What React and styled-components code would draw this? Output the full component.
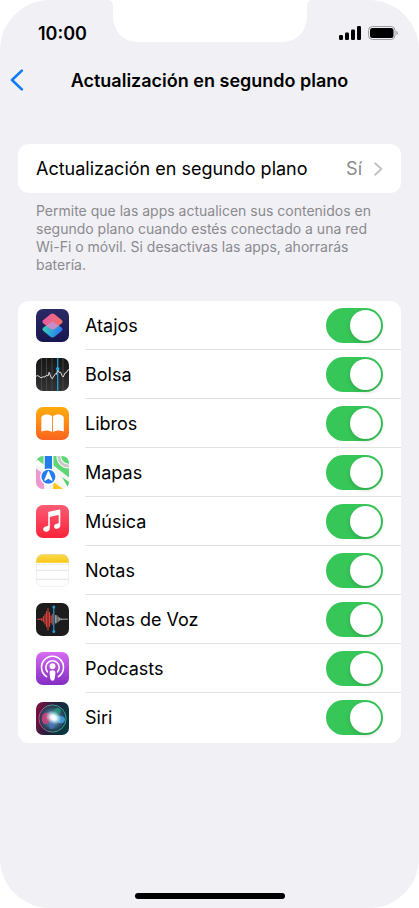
import React, { useState } from "react";
import styled, { createGlobalStyle } from "styled-components";

const AtajosIcon = () => (
  <svg viewBox="0 0 33 33" aria-hidden="true">
    <defs>
      <linearGradient id="atajosBg" x1="0" y1="0" x2="0" y2="1">
        <stop offset="0" stopColor="#2c2a66" />
        <stop offset="1" stopColor="#171650" />
      </linearGradient>
      <linearGradient id="atajosTop" x1="0" y1="0.3" x2="1" y2="0.7">
        <stop offset="0" stopColor="#e85aa8" />
        <stop offset="0.5" stopColor="#ee6783" />
        <stop offset="1" stopColor="#f4705f" />
      </linearGradient>
      <linearGradient id="atajosBottom" x1="0" y1="0.3" x2="1" y2="0.6">
        <stop offset="0" stopColor="#3fd0a8" />
        <stop offset="0.5" stopColor="#2ea6dc" />
        <stop offset="1" stopColor="#2f6ff0" />
      </linearGradient>
    </defs>
    <rect width="33" height="33" rx="7" fill="url(#atajosBg)" />
    <path
      d="M14.6 13.4Q16.5 12.4 18.4 13.4L25.6 18.6Q27.6 20.4 25.6 22L18.6 27.8Q16.5 29.2 14.4 27.8L7.4 22Q5.4 20.4 7.4 18.6Z"
      fill="url(#atajosBottom)"
    />
    <path
      d="M14.4 5.2Q16.5 3.8 18.6 5.2L25.6 11Q27.6 12.6 25.6 14.4L18.6 19.8Q16.5 21.2 14.4 19.8L7.4 14.4Q5.4 12.6 7.4 11Z"
      fill="url(#atajosTop)"
    />
    <path
      d="M10.4 16.7L16.5 12.4L22.6 16.7L18.6 19.8Q16.5 21.2 14.4 19.8Z"
      fill="#b79be0"
      opacity="0.75"
    />
  </svg>
);

const BolsaIcon = () => (
  <svg viewBox="0 0 33 33" aria-hidden="true">
    <defs>
      <linearGradient id="bolsaBg" x1="0" y1="0" x2="0" y2="1">
        <stop offset="0" stopColor="#151515" />
        <stop offset="1" stopColor="#343434" />
      </linearGradient>
    </defs>
    <rect width="33" height="33" rx="7" fill="url(#bolsaBg)" />
    <path
      d="M5.5 1V32M10.5 0V33M16 0V33M27 0V33"
      stroke="#4b4b4b"
      strokeWidth="0.8"
    />
    <path d="M21.7 0V33" stroke="#1f9fd8" strokeWidth="1.3" />
    <path
      d="M0 18.2L1.5 17.6L3 18.4L5 19.8L7 18.8L9 19L10.5 17L12 18L13.2 14.2L15 19.2L16.2 20.8L18 18L19.6 15.6L20.4 16.4L21.7 11.5L23.2 14.4L24.6 14.2L26 17.6L27.2 19L29 15L30.5 14.4L31.7 12.2L33 11.6"
      fill="none"
      stroke="#eeeeee"
      strokeWidth="0.9"
      strokeLinejoin="round"
    />
    <circle cx="21.7" cy="10.8" r="1.7" fill="#27a9e4" />
  </svg>
);

const LibrosIcon = () => (
  <svg viewBox="0 0 33 33" aria-hidden="true">
    <defs>
      <linearGradient id="librosBg" x1="0" y1="0" x2="0" y2="1">
        <stop offset="0" stopColor="#ffac0c" />
        <stop offset="1" stopColor="#fb641f" />
      </linearGradient>
    </defs>
    <rect width="33" height="33" rx="7" fill="url(#librosBg)" />
    <path
      d="M16.1 9.6C15 8.1 13 7.6 11.1 7.6C9 7.6 7 8.2 6 9.2Q5.3 9.8 5.3 10.6V23.8Q5.3 24.8 6.3 24.3C9 23 13.2 23.1 16.1 25Z"
      fill="#fff"
    />
    <path
      d="M17 9.6C18.1 8.1 20.1 7.6 22 7.6C24.1 7.6 26.1 8.2 27.1 9.2Q27.8 9.8 27.8 10.6V23.8Q27.8 24.8 26.8 24.3C24.1 23 19.9 23.1 17 25Z"
      fill="#fff"
    />
  </svg>
);

const MapasIcon = () => (
  <svg viewBox="0 0 33 33" aria-hidden="true">
    <defs>
      <clipPath id="mapasClip">
        <rect width="33" height="33" rx="7" />
      </clipPath>
    </defs>
    <g clipPath="url(#mapasClip)">
      <rect width="33" height="33" fill="#f4f4f2" />
      <path d="M0 0H7.5V11.5L0 5.5Z" fill="#63d879" />
      <path d="M17.5 0H33V21.5L17.5 9.5Z" fill="#5fd676" />
      <path d="M0 12.5L8 18.5V33H0Z" fill="#ee97d3" />
      <path d="M17 33L17.5 26L27 33Z" fill="#fbc91c" />
      <path d="M22 20L33 28.5V33H31L20.5 25Z" fill="#f8f8f6" />
      <path d="M26 21L33 26V33Z" fill="#55d06c" />
      <circle cx="32.5" cy="0.5" r="9.6" fill="none" stroke="#fff" strokeWidth="4.8" />
      <circle cx="32.5" cy="0.5" r="9.6" fill="none" stroke="#c9cbc9" strokeWidth="3" />
      <path d="M0 5.5L17 18.5" stroke="#fff" strokeWidth="4.5" />
      <path d="M8.8 0H16V20H8.8Z" fill="#237be8" />
      <circle cx="12.4" cy="20.8" r="8.3" fill="#fff" />
      <circle cx="12.4" cy="20.8" r="7" fill="#237df0" />
      <path
        d="M12.4 15.1Q12.9 15.1 13.2 15.9L16.5 24Q16.7 25.2 15.6 24.7L12.4 22.7L9.2 24.7Q8.1 25.2 8.3 24L11.6 15.9Q11.9 15.1 12.4 15.1Z"
        fill="#fff"
      />
    </g>
  </svg>
);

const MusicaIcon = () => (
  <svg viewBox="0 0 33 33" aria-hidden="true">
    <defs>
      <linearGradient id="musicaBg" x1="0" y1="0" x2="0" y2="1">
        <stop offset="0" stopColor="#fb5c74" />
        <stop offset="1" stopColor="#fa2339" />
      </linearGradient>
    </defs>
    <rect width="33" height="33" rx="7" fill="url(#musicaBg)" />
    <path
      d="M12.2 7.6Q12.2 6.9 12.9 6.7L23.4 4.6Q24.3 4.5 24.3 5.3V20.6C24.3 22.6 22.8 23.8 20.8 23.8C19.2 23.8 18 22.8 18 21.4C18 19.9 19.1 19 20.8 18.7L21.8 18.5Q22.7 18.3 22.7 17.4V10.6Q22.7 10 22.1 10.1L14.4 11.7Q13.8 11.8 13.8 12.4V23.2C13.8 25.3 12.3 26.7 10.2 26.7C8.5 26.7 7.2 25.7 7.2 24.2C7.2 22.6 8.4 21.7 10.1 21.4L11.3 21.1Q12.2 20.9 12.2 20Z"
      fill="#fff"
    />
  </svg>
);

const NotasIcon = () => (
  <svg viewBox="0 0 33 33" aria-hidden="true">
    <defs>
      <clipPath id="notasClip">
        <rect width="33" height="33" rx="7" />
      </clipPath>
      <linearGradient id="notasTop" x1="0" y1="0" x2="0" y2="1">
        <stop offset="0" stopColor="#fad94e" />
        <stop offset="1" stopColor="#f9c916" />
      </linearGradient>
    </defs>
    <g clipPath="url(#notasClip)">
      <rect width="33" height="33" fill="#fefefe" />
      <rect width="33" height="8.8" fill="url(#notasTop)" />
      <path d="M0 10.3H33" stroke="#b9b9b9" strokeWidth="0.7" strokeDasharray="0.7 1" />
      <path d="M0 16.3H33M0 25.3H33" stroke="#d8d8d8" strokeWidth="0.7" />
    </g>
    <rect x="0.3" y="0.3" width="32.4" height="32.4" rx="6.8" fill="none" stroke="#dedede" strokeWidth="0.5" />
  </svg>
);

const VozIcon = () => (
  <svg viewBox="0 0 33 33" aria-hidden="true">
    <rect width="33" height="33" rx="7" fill="#1c1c1e" />
    <path
      d="M1.5 16.2H6M5.8 15.2V17.4M7.4 13.6V18.8M9 11.4V21M10.5 8.6V23.8M12 5.6V27M13.5 9.2V23.2M15 13V19.6M16.3 11.2V21.2"
      stroke="#d9433b"
      strokeWidth="1.1"
      strokeLinecap="round"
    />
    <path
      d="M19.4 12.4V20M20.8 12.6V19.8M22.2 14V18.4M23.6 15V17.4M25 15.7V16.7M25 16.2H31.5"
      stroke="#b9b9b9"
      strokeWidth="0.9"
      strokeLinecap="round"
    />
    <path d="M17.8 4V28.5" stroke="#2499d6" strokeWidth="1.2" />
    <circle cx="17.8" cy="4" r="1.5" fill="#2499d6" />
    <circle cx="17.8" cy="28.5" r="1.5" fill="#2499d6" />
  </svg>
);

const PodcastsIcon = () => (
  <svg viewBox="0 0 33 33" aria-hidden="true">
    <defs>
      <linearGradient id="podcastsBg" x1="0" y1="0" x2="0" y2="1">
        <stop offset="0" stopColor="#d66cf2" />
        <stop offset="1" stopColor="#832cc4" />
      </linearGradient>
    </defs>
    <rect width="33" height="33" rx="7" fill="url(#podcastsBg)" />
    <g fill="none" stroke="#fff" strokeWidth="1.6" strokeLinecap="round">
      <path d="M10.6 24.6A11 11 0 1 1 22.4 24.6" />
      <path d="M11.4 19.8A6.7 6.7 0 1 1 21.6 19.8" />
    </g>
    <circle cx="16.5" cy="14.2" r="2.9" fill="#fff" />
    <path
      d="M13.6 20.6C13.6 18.9 14.8 18.2 16.5 18.2C18.2 18.2 19.4 18.9 19.4 20.6C19.4 22.6 19 25 18.6 27Q18.3 28.8 16.5 28.8Q14.7 28.8 14.4 27C14 25 13.6 22.6 13.6 20.6Z"
      fill="#fff"
    />
  </svg>
);

const SiriIcon = () => (
  <svg viewBox="0 0 33 33" aria-hidden="true">
    <defs>
      <linearGradient id="siriBg" x1="0" y1="0.3" x2="1" y2="0.6">
        <stop offset="0" stopColor="#7a1040" />
        <stop offset="0.45" stopColor="#23203f" />
        <stop offset="1" stopColor="#083840" />
      </linearGradient>
      <linearGradient id="siriRing" x1="0" y1="0.5" x2="1" y2="0.3">
        <stop offset="0" stopColor="#d2447e" />
        <stop offset="0.4" stopColor="#59a58e" />
        <stop offset="1" stopColor="#2fae9c" />
      </linearGradient>
      <radialGradient id="siriOrb">
        <stop offset="0" stopColor="#8da9c6" />
        <stop offset="0.6" stopColor="#3b6783" />
        <stop offset="1" stopColor="#1f4059" stopOpacity="0.5" />
      </radialGradient>
      <radialGradient id="siriGlow">
        <stop offset="0" stopColor="#fff" />
        <stop offset="0.35" stopColor="#f2fdff" stopOpacity="0.95" />
        <stop offset="1" stopColor="#b8e8f4" stopOpacity="0" />
      </radialGradient>
    </defs>
    <rect width="33" height="33" rx="7" fill="url(#siriBg)" />
    <circle cx="16.5" cy="16.5" r="13.6" fill="url(#siriOrb)" stroke="url(#siriRing)" strokeWidth="0.9" />
    <path
      d="M17 15C12 9 7 10 6 15C5 21 9 24 12 21C14 19 15 17 17 15Z"
      fill="#d83d7c"
      opacity="0.8"
    />
    <path d="M17 15C16 9 19 5 23 6C27 8 25 13 17 15Z" fill="#2fa37e" opacity="0.7" />
    <path
      d="M17 15C21 13 28 13 29 17C29 21 25 23 22 20C20 18 19 16 17 15Z"
      fill="#4a9fe0"
      opacity="0.85"
    />
    <path d="M17 15C13 20 11 26 15 27C20 28 20 20 17 15Z" fill="#4a77c6" opacity="0.6" />
    <ellipse cx="17.5" cy="15.6" rx="8.5" ry="6.5" fill="url(#siriGlow)" transform="rotate(30 17.5 15.6)" />
  </svg>
);

const apps = [
  { id: "atajos", name: "Atajos", Icon: AtajosIcon },
  { id: "bolsa", name: "Bolsa", Icon: BolsaIcon },
  { id: "libros", name: "Libros", Icon: LibrosIcon },
  { id: "mapas", name: "Mapas", Icon: MapasIcon },
  { id: "musica", name: "Música", Icon: MusicaIcon },
  { id: "notas", name: "Notas", Icon: NotasIcon },
  { id: "voz", name: "Notas de Voz", Icon: VozIcon },
  { id: "podcasts", name: "Podcasts", Icon: PodcastsIcon },
  { id: "siri", name: "Siri", Icon: SiriIcon },
];

const App = () => {
  const [enabled, setEnabled] = useState(() =>
    Object.fromEntries(apps.map((app) => [app.id, true]))
  );

  const toggle = (id) => setEnabled((prev) => ({ ...prev, [id]: !prev[id] }));

  return (
    <>
      <GlobalStyle />
      <Screen>
        <Notch viewBox="0 0 204 42" aria-hidden="true">
          <path
            d="M0 0C4 0 5 3 5 8V15C5 32 15 42 32 42H172C189 42 199 32 199 15V8C199 3 200 0 204 0Z"
            fill="#fff"
          />
        </Notch>
        <StatusBar>
          <Time>10:00</Time>
          <StatusIcons>
            <SignalIcon viewBox="0 0 22 14" aria-hidden="true">
              <rect x="0" y="9" width="4" height="5" rx="1.2" />
              <rect x="6" y="6.5" width="4" height="7.5" rx="1.2" />
              <rect x="12" y="3.5" width="4" height="10.5" rx="1.2" />
              <rect x="18" y="0" width="4" height="14" rx="1.2" />
            </SignalIcon>
            <BatteryIcon viewBox="0 0 30 14" aria-hidden="true">
              <rect x="0.5" y="0.5" width="26.5" height="13" rx="4" fill="none" stroke="#9c9ca0" />
              <rect x="2" y="2" width="23.5" height="10" rx="2.5" />
              <path d="M28.4 4.8C30.2 5.6 30.2 8.4 28.4 9.2Z" fill="#9c9ca0" />
            </BatteryIcon>
          </StatusIcons>
        </StatusBar>
        <NavBar>
          <BackButton type="button" aria-label="Atrás">
            <svg viewBox="0 0 14 22" aria-hidden="true">
              <path d="M11.8 1.6L2 11L11.8 20.4" />
            </svg>
          </BackButton>
          <Title>Actualización en segundo plano</Title>
        </NavBar>
        <Content>
          <Card>
            <LinkRow href="#actualizacion">
              <LinkText>Actualización en segundo plano</LinkText>
              <LinkValue>Sí</LinkValue>
              <Chevron viewBox="0 0 9 14" aria-hidden="true">
                <path d="M1.2 1.2L7.4 7L1.2 12.8" />
              </Chevron>
            </LinkRow>
          </Card>
          <Note>
            Permite que las apps actualicen sus contenidos en segundo plano
            cuando estés conectado a una red Wi-Fi o móvil. Si desactivas las
            apps, ahorrarás batería.
          </Note>
          <Card as="ul">
            {apps.map(({ id, name, Icon }) => (
              <AppRow key={id}>
                <AppIcon>
                  <Icon />
                </AppIcon>
                <AppBody>
                  <AppName htmlFor={id}>{name}</AppName>
                  <Switch
                    id={id}
                    type="checkbox"
                    role="switch"
                    checked={enabled[id]}
                    onChange={() => toggle(id)}
                  />
                </AppBody>
              </AppRow>
            ))}
          </Card>
        </Content>
        <HomeIndicator />
      </Screen>
    </>
  );
};

export default App;

const GlobalStyle = createGlobalStyle`
  * {
    box-sizing: border-box;
  }
  body {
    margin: 0;
    background: #fff;
    color: #000;
    font-family: Inter, "Liberation Sans", sans-serif;
  }
`;

const Screen = styled.div`
  position: relative;
  display: flex;
  flex-direction: column;
  min-height: 100vh;
  background: #f1f0f5;
  border-radius: 50px;
`;

const Notch = styled.svg`
  position: absolute;
  top: 0;
  left: 50%;
  width: 204px;
  height: 42px;
  transform: translateX(-50%);
`;

const StatusBar = styled.div`
  display: flex;
  align-items: center;
  justify-content: space-between;
  height: 66px;
  padding: 0 21px 0 38px;
`;

const Time = styled.span`
  font-size: 18px;
  font-weight: 600;
`;

const StatusIcons = styled.div`
  display: flex;
  align-items: center;
  gap: 7px;
`;

const SignalIcon = styled.svg`
  width: 22px;
  height: 14px;
`;

const BatteryIcon = styled.svg`
  width: 30px;
  height: 14px;
`;

const NavBar = styled.header`
  display: grid;
  grid-template-columns: 1fr auto 1fr;
  align-items: center;
  height: 28px;
  padding: 0 10px;
`;

const BackButton = styled.button`
  display: flex;
  justify-self: start;
  padding: 0;
  border: none;
  background: none;
  cursor: pointer;
  svg {
    width: 14px;
    height: 22px;
    fill: none;
    stroke: #0f7bf5;
    stroke-width: 2.6;
    stroke-linecap: round;
    stroke-linejoin: round;
  }
`;

const Title = styled.h1`
  margin: 0;
  font-size: 18px;
  font-weight: 600;
  white-space: nowrap;
`;

const Content = styled.main`
  flex: 1;
  padding: 50px 18px 0;
`;

const Card = styled.div`
  margin: 0;
  padding: 0;
  overflow: hidden;
  list-style: none;
  background: #fff;
  border-radius: 11px;
`;

const LinkRow = styled.a`
  display: flex;
  align-items: center;
  height: 49px;
  padding: 0 18px;
  color: #000;
  font-size: 18px;
  text-decoration: none;
`;

const LinkText = styled.span`
  flex: 1;
  white-space: nowrap;
`;

const LinkValue = styled.span`
  color: #8a8a8e;
`;

const Chevron = styled.svg`
  width: 9px;
  height: 14px;
  margin-left: 12px;
  fill: none;
  stroke: #c4c4c7;
  stroke-width: 2;
  stroke-linecap: round;
  stroke-linejoin: round;
`;

const Note = styled.p`
  margin: 9px 18px 27px;
  color: #8a8a8e;
  font-size: 14px;
  line-height: 18px;
`;

const AppRow = styled.li`
  display: flex;
  align-items: center;
  gap: 16px;
  padding-left: 18px;
`;

const AppIcon = styled.span`
  display: flex;
  svg {
    width: 33px;
    height: 33px;
  }
`;

const AppBody = styled.div`
  display: flex;
  flex: 1;
  align-items: center;
  justify-content: space-between;
  height: 49px;
  padding-right: 18px;
  border-bottom: 1px solid #e2e2e5;
  ${AppRow}:last-child & {
    height: 50px;
    border-bottom-color: transparent;
  }
`;

const AppName = styled.label`
  font-size: 18px;
  cursor: pointer;
`;

const Switch = styled.input`
  appearance: none;
  display: flex;
  width: 57px;
  height: 35px;
  margin: 0;
  padding: 2px;
  border-radius: 18px;
  background: ${({ checked }) => (checked ? "#37c759" : "#e9e9eb")};
  cursor: pointer;
  &::before {
    content: "";
    width: 31px;
    height: 31px;
    margin-left: ${({ checked }) => (checked ? "auto" : "0")};
    border-radius: 50%;
    background: #fff;
    box-shadow: 0 2px 5px rgba(0, 0, 0, 0.16);
  }
`;

const HomeIndicator = styled.div`
  align-self: center;
  width: 150px;
  height: 6px;
  margin-bottom: 9px;
  border-radius: 3px;
  background: #000;
`;
